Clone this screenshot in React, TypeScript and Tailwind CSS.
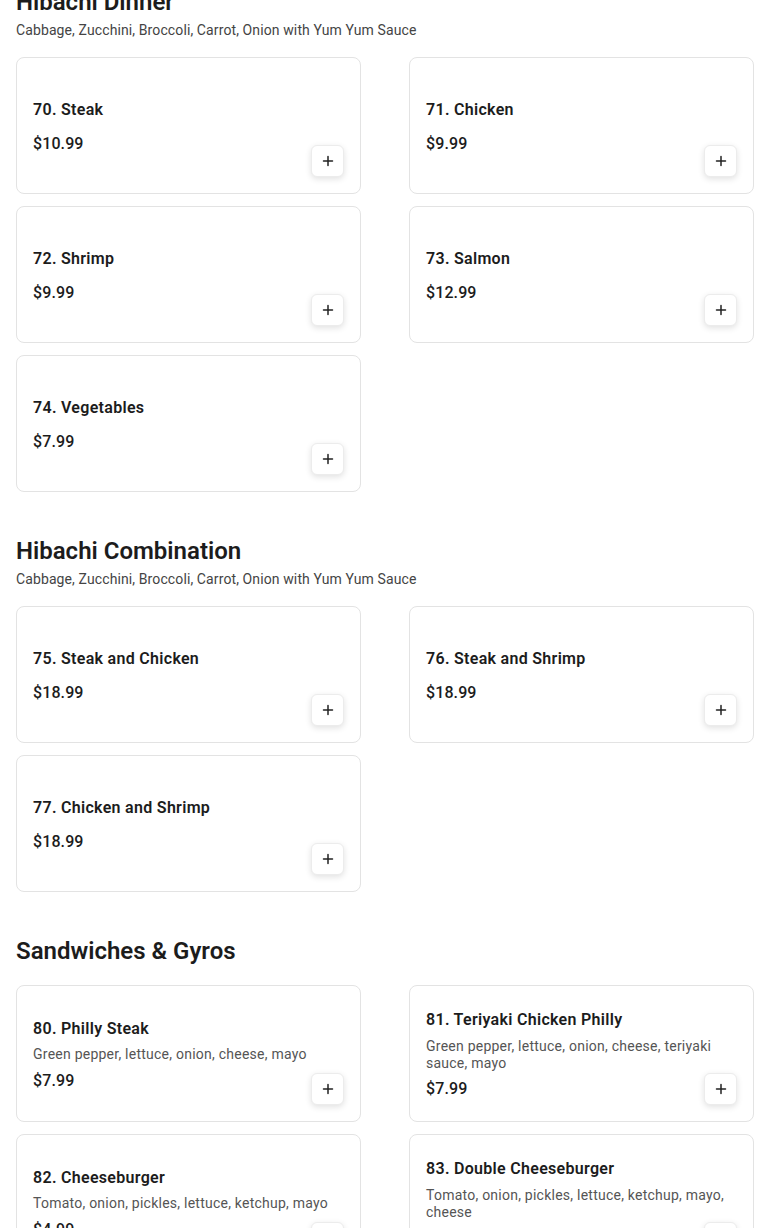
import React from "react";

type Item = { name: string; price: string; desc?: string };
type Section = { title: string; subtitle?: string; items: Item[] };

const sections: Section[] = [
  {
    title: "Hibachi Dinner",
    subtitle: "Cabbage, Zucchini, Broccoli, Carrot, Onion with Yum Yum Sauce",
    items: [
      { name: "70. Steak", price: "$10.99" },
      { name: "71. Chicken", price: "$9.99" },
      { name: "72. Shrimp", price: "$9.99" },
      { name: "73. Salmon", price: "$12.99" },
      { name: "74. Vegetables", price: "$7.99" },
    ],
  },
  {
    title: "Hibachi Combination",
    subtitle: "Cabbage, Zucchini, Broccoli, Carrot, Onion with Yum Yum Sauce",
    items: [
      { name: "75. Steak and Chicken", price: "$18.99" },
      { name: "76. Steak and Shrimp", price: "$18.99" },
      { name: "77. Chicken and Shrimp", price: "$18.99" },
    ],
  },
  {
    title: "Sandwiches & Gyros",
    items: [
      { name: "80. Philly Steak", price: "$7.99", desc: "Green pepper, lettuce, onion, cheese, mayo" },
      { name: "81. Teriyaki Chicken Philly", price: "$7.99", desc: "Green pepper, lettuce, onion, cheese, teriyaki sauce, mayo" },
      { name: "82. Cheeseburger", price: "$4.99", desc: "Tomato, onion, pickles, lettuce, ketchup, mayo" },
      { name: "83. Double Cheeseburger", price: "$5.99", desc: "Tomato, onion, pickles, lettuce, ketchup, mayo, cheese" },
      { name: "84. Gyro", price: "$7.99", desc: "Lettuce, tomato, onion, tzatziki sauce" },
      { name: "85. Chicken Gyro", price: "$7.99", desc: "Lettuce, tomato, onion, tzatziki sauce" },
    ],
  },
];

function PlusIcon() {
  return (
    <svg width="12" height="12" viewBox="0 0 12 12" fill="none">
      <path d="M6 1.5v9M1.5 6h9" stroke="#222" strokeWidth="1.5" strokeLinecap="round" />
    </svg>
  );
}

function Card({ item }: { item: Item }) {
  return (
    <div className="relative h-[137px] rounded-lg border border-[#e3e3e3] bg-white px-4 pt-[18px] pb-4 flex items-center">
      <div className="flex-1 flex flex-col">
        <div className="text-[16px] leading-6 font-semibold tracking-[0.3px] text-[#1c1c1c]">{item.name}</div>
        {item.desc && (
          <div className="mt-[5.5px] text-[14px] leading-[17px] tracking-[0.24px] text-[#555]">{item.desc}</div>
        )}
        <div className={`${item.desc ? "mt-[5.5px]" : "mt-2.5"} text-[16px] leading-6 font-medium tracking-[0.1px] text-[#1c1c1c]`}>
          {item.price}
        </div>
      </div>
      <button className="absolute right-4 bottom-4 w-[33px] h-8 rounded-md bg-white border border-[#ececec] shadow-[0_2px_6px_rgba(0,0,0,0.12)] flex items-center justify-center">
        <PlusIcon />
      </button>
    </div>
  );
}

export default function App() {
  return (
    <div className="bg-white min-h-screen px-4 -mt-[14px]" style={{ fontFamily: "Roboto, 'Noto Sans', sans-serif" }}>
      {sections.map((s, i) => (
        <section key={s.title} className={i === 0 ? "" : "mt-[43px]"}>
          <h2 className="text-[24px] leading-8 font-semibold text-[#1c1c1c]">{s.title}</h2>
          {s.subtitle && <p className="mt-0.5 text-[14px] leading-5 tracking-[0.11px] text-[#444]">{s.subtitle}</p>}
          <div className={`${s.subtitle ? "mt-[17px]" : "mt-[18px]"} grid grid-cols-2 gap-x-12 gap-y-3`}>
            {s.items.map((it) => (
              <Card key={it.name} item={it} />
            ))}
          </div>
        </section>
      ))}
    </div>
  );
}
